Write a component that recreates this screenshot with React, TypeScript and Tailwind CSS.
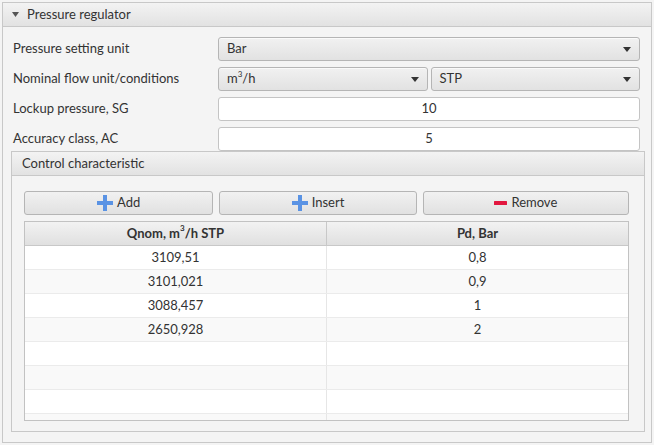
import React from 'react';

const Arrow = () => (
  <svg width="8" height="5" viewBox="0 0 8 5" className="shrink-0">
    <path d="M0 0 H8 L4 5 Z" fill="#333" />
  </svg>
);

const Combo = ({ value, className = '' }: { value: React.ReactNode; className?: string }) => (
  <div
    className={`flex h-[24px] items-center justify-between rounded-[3px] border border-[#b5b5b5] bg-gradient-to-b from-[#f1f1f1] to-[#e2e2e2] pl-[8px] pr-[8px] shadow-[inset_0_1px_0_#fafafa] ${className}`}
  >
    <span>{value}</span>
    <Arrow />
  </div>
);

const Field = ({ value }: { value: string }) => (
  <div className="flex h-[24px] items-center justify-center rounded-[3px] border border-[#c4c4c4] bg-white">
    {value}
  </div>
);

const Plus = () => (
  <svg width="16" height="16" viewBox="0 0 16 16" className="shrink-0">
    <rect x="6" y="0" width="4" height="16" fill="#5a93e4" />
    <rect x="0" y="6" width="16" height="4" fill="#5a93e4" />
  </svg>
);

const Minus = () => (
  <svg width="13" height="4" viewBox="0 0 13 4" className="shrink-0">
    <rect x="0" y="0" width="13" height="4" rx="0.5" fill="#e2173f" />
  </svg>
);

const Button = ({ w, icon, label }: { w: string; icon: React.ReactNode; label: string }) => (
  <div
    className={`flex h-[24px] items-center justify-center gap-[4px] rounded-[3px] border border-[#b5b5b5] bg-gradient-to-b from-[#f1f1f1] to-[#e1e1e1] ${w}`}
  >
    {icon}
    <span>{label}</span>
  </div>
);

const rows: [string, string][] = [
  ['3109,51', '0,8'],
  ['3101,021', '0,9'],
  ['3088,457', '1'],
  ['2650,928', '2'],
  ['', ''],
  ['', ''],
  ['', ''],
  ['', ''],
];

const Sup3 = () => <sup className="relative top-[-1px] align-super text-[8px] leading-none">3</sup>;

export default function App() {
  return (
    <div
      className="h-[445px] w-[654px] overflow-hidden bg-[#f4f4f4] p-[2px] text-[12px] text-[#333]"
      style={{ fontFamily: 'Lato, "Noto Sans", sans-serif' }}
    >
      <div className="flex h-[441px] flex-col border border-[#c8c8c8]">
        {/* outer header */}
        <div className="flex h-[24px] shrink-0 items-center gap-[8px] border-b border-[#c8c8c8] bg-gradient-to-b from-[#f3f3f3] to-[#e2e2e2] pl-[9px] text-[13px]">
          <svg width="7" height="5" viewBox="0 0 7 5">
            <path d="M0 0 H7 L3.5 5 Z" fill="#555" />
          </svg>
          <span>Pressure regulator</span>
        </div>

        <div className="flex shrink-0 flex-col pl-[10px] pr-[11px] pt-[10px]">
          <div className="grid grid-cols-[205px_1fr] gap-y-[6px] text-[13px]">
            <div className="flex items-center">Pressure setting unit</div>
            <Combo value="Bar" />
            <div className="flex items-center">Nominal flow unit/conditions</div>
            <div className="flex gap-[3px]">
              <Combo
                className="flex-1"
                value={
                  <>
                    m<Sup3 />/h
                  </>
                }
              />
              <Combo className="flex-1" value="STP" />
            </div>
            <div className="flex items-center">Lockup pressure, SG</div>
            <Field value="10" />
            <div className="flex items-center">Accuracy class, AC</div>
            <Field value="5" />
          </div>
        </div>

        {/* control characteristic pane */}
        <div className="mb-[10px] ml-[8px] mr-[6px] flex min-h-0 flex-1 flex-col border border-[#c8c8c8] text-[13px]">
          <div className="flex h-[24px] shrink-0 items-center border-b border-[#c8c8c8] bg-gradient-to-b from-[#f3f3f3] to-[#e2e2e2] pl-[10px]">
            Control characteristic
          </div>
          <div className="flex min-h-0 flex-1 flex-col pb-[10px] pl-[12px] pr-[15px] pt-[15px]">
            <div className="flex shrink-0 gap-[6px]">
              <Button w="w-[190px]" icon={<Plus />} label="Add" />
              <Button w="w-[198px]" icon={<Plus />} label="Insert" />
              <Button w="w-[207px]" icon={<Minus />} label="Remove" />
            </div>
            <div className="mt-[6px] flex min-h-0 flex-1 flex-col overflow-hidden border border-[#c2c2c2] bg-white">
              <div className="flex h-[24px] shrink-0 border-b border-[#c8c8c8] bg-gradient-to-b from-[#f2f2f2] to-[#e0e0e0] font-bold">
                <div className="flex w-[302px] items-center justify-center border-r border-[#c8c8c8]">
                  <span>
                    Qnom, m<Sup3 />/h STP
                  </span>
                </div>
                <div className="flex flex-1 items-center justify-center">Pd, Bar</div>
              </div>
              {rows.map((r, i) => (
                <div
                  key={i}
                  className={`flex h-[24px] shrink-0 border-b border-[#ebebeb] ${i % 2 === 0 ? 'bg-white' : 'bg-[#f9f9f9]'}`}
                >
                  <div className="flex w-[302px] items-center justify-center border-r border-[#e6e6e6]">{r[0]}</div>
                  <div className="flex flex-1 items-center justify-center">{r[1]}</div>
                </div>
              ))}
            </div>
          </div>
        </div>
      </div>
    </div>
  );
}
